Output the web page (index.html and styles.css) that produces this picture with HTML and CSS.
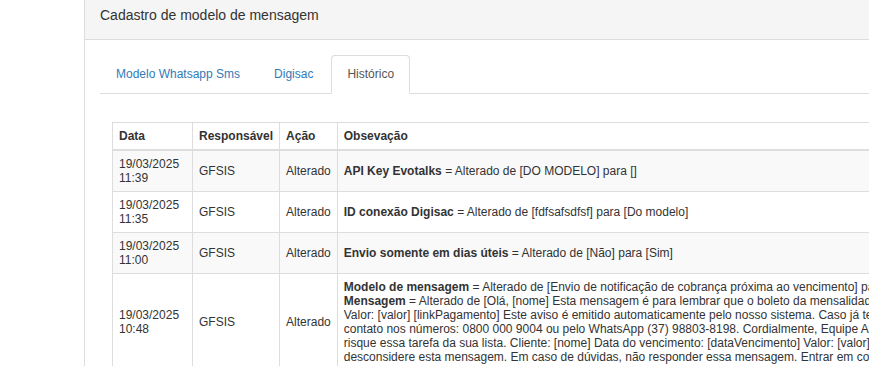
FILE: index.html
```html
<!DOCTYPE html>
<html lang="pt-BR">
<head>
  <meta charset="UTF-8">
  <title>Cadastro de modelo de mensagem</title>
  <link rel="stylesheet" href="styles.css">
</head>
<body>
  <div class="pagina">
    <aside class="lateral"></aside>

    <div class="painel">
      <div class="painel-titulo">Cadastro de modelo de mensagem</div>

      <div class="painel-corpo">
        <ul class="abas">
          <li><a href="#">Modelo Whatsapp Sms</a></li>
          <li><a href="#">Digisac</a></li>
          <li class="ativa"><a href="#">Histórico</a></li>
        </ul>

        <div class="aba-conteudo">
          <table class="historico">
            <thead>
              <tr>
                <th class="col-data">Data</th>
                <th class="col-resp">Responsável</th>
                <th class="col-acao">Ação</th>
                <th>Obsevação</th>
              </tr>
            </thead>
            <tbody>
              <tr>
                <td>19/03/2025 11:39</td>
                <td>GFSIS</td>
                <td>Alterado</td>
                <td class="obs"><strong>API Key Evotalks</strong> = Alterado de [DO MODELO] para []</td>
              </tr>
              <tr>
                <td>19/03/2025 11:35</td>
                <td>GFSIS</td>
                <td>Alterado</td>
                <td class="obs"><strong>ID conexão Digisac</strong> = Alterado de [fdfsafsdfsf] para [Do modelo]</td>
              </tr>
              <tr>
                <td>19/03/2025 11:00</td>
                <td>GFSIS</td>
                <td>Alterado</td>
                <td class="obs"><strong>Envio somente em dias úteis</strong> = Alterado de [Não] para [Sim]</td>
              </tr>
              <tr>
                <td>19/03/2025 10:48</td>
                <td>GFSIS</td>
                <td>Alterado</td>
                <td class="obs">
                  <strong>Modelo de mensagem</strong> = Alterado de [Envio de notificação de cobrança próxima ao vencimento] para [Lembrete de vencimento do boleto]<br>
                  <strong>Mensagem</strong> = Alterado de [Olá, [nome] Esta mensagem é para lembrar que o boleto da mensalidade vence em breve. Data do vencimento: [dataVencimento]<br>
                  Valor: [valor] [linkPagamento] Este aviso é emitido automaticamente pelo nosso sistema. Caso já tenha efetuado o pagamento, desconsidere. Dúvidas, entre em<br>
                  contato nos números: 0800 000 9004 ou pelo WhatsApp (37) 98803-8198. Cordialmente, Equipe Atendimento] para [Olá, [nome] Não se esqueça do boleto, pague e<br>
                  risque essa tarefa da sua lista. Cliente: [nome] Data do vencimento: [dataVencimento] Valor: [valor] [linkPagamento] Caso o pagamento já tenha sido efetuado,<br>
                  desconsidere esta mensagem. Em caso de dúvidas, não responder essa mensagem. Entrar em contato pelo número 0800 000 9004.]
                </td>
              </tr>
            </tbody>
          </table>
        </div>
      </div>
    </div>
  </div>
</body>
</html>
```

FILE: styles.css
```css
html, body {
  margin: 0;
  padding: 0;
  overflow: hidden;
  background: #fff;
}

body {
  font-family: "Liberation Sans", Arial, sans-serif;
  font-size: 12px;
  color: #333;
}

.pagina {
  display: flex;
}

.lateral {
  flex: none;
  width: 84px;
}

.painel {
  flex: none;
  width: 1200px;
  border-left: 1px solid #ddd;
}

.painel-titulo {
  background-color: #f5f5f5;
  border-bottom: 1px solid #ddd;
  padding: 5px 15px 14px;
  font-size: 14px;
  line-height: 20px;
}

.painel-corpo {
  padding: 15px;
}

.abas {
  list-style: none;
  margin: 0;
  padding: 0;
  display: flex;
  border-bottom: 1px solid #ddd;
}

.abas li {
  margin-bottom: -1px;
}

.abas a {
  display: block;
  margin-right: 2px;
  padding: 10px 15px;
  line-height: 17px;
  border: 1px solid transparent;
  border-radius: 4px 4px 0 0;
  color: #337ab7;
  text-decoration: none;
}

.abas .ativa a {
  color: #555;
  background-color: #fff;
  border-color: #ddd #ddd transparent;
}

.aba-conteudo {
  padding: 28px 12px 0;
}

.historico {
  border-collapse: collapse;
  border: 1px solid #ddd;
}

.historico th,
.historico td {
  border: 1px solid #ddd;
  padding: 6px;
  line-height: 14px;
  text-align: left;
  vertical-align: middle;
}

.historico th {
  border-bottom-width: 2px;
}

.historico tbody tr:nth-child(odd) {
  background-color: #f9f9f9;
}

.col-data {
  width: 67px;
}

.col-resp {
  width: 74px;
}

.col-acao {
  width: 44px;
}

.obs {
  white-space: nowrap;
}
```
